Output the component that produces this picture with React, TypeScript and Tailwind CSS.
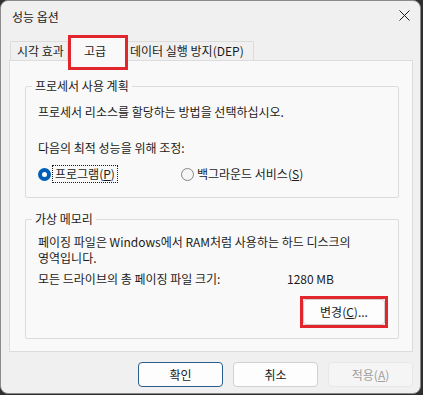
import React from "react";

const font = { fontFamily: '"Noto Sans CJK KR", "Noto Sans", sans-serif' };

function Radio({ checked }: { checked: boolean }) {
  return checked ? (
    <span className="w-[13px] h-[13px] rounded-full bg-[#005fb8] flex items-center justify-center shrink-0">
      <span className="w-[5px] h-[5px] rounded-full bg-white" />
    </span>
  ) : (
    <span className="w-[13px] h-[13px] rounded-full border border-[#858585] bg-[#f6f6f6] shrink-0" />
  );
}

function Group({ title, className, children }: { title: string; className: string; children: React.ReactNode }) {
  return (
    <div className={"relative border border-[#dcdcdc] rounded-[2px] " + className}>
      <span className="absolute left-[6px] top-[-9px] px-[3px] bg-[#f9f9f9] text-[12px] leading-[16px] text-[#1b1b1b]">
        {title}
      </span>
      {children}
    </div>
  );
}

export default function App() {
  return (
    <div className="w-[423px] h-[395px] bg-[#2e2e2e] overflow-hidden" style={font}>
      <div className="w-[421px] h-[394px] bg-[#f0f0f0] rounded-[8px] border border-[#8a8a8a] flex flex-col text-[12px] leading-[16px] text-[#1b1b1b]">
        {/* Title bar */}
        <div className="h-[31px] flex items-center justify-between pl-[11px] pr-[10px]">
          <span className="text-[12px]">성능 옵션</span>
          <svg width="11" height="11" viewBox="0 0 11 11" className="mt-[-2px]">
            <path d="M0.5 0.5 L10.5 10.5 M10.5 0.5 L0.5 10.5" stroke="#1b1b1b" strokeWidth="1" />
          </svg>
        </div>

        {/* Tabs */}
        <div className="h-[28px] ml-[9px] flex items-end relative z-10">
          <div className="w-[58px] h-[19px] border border-b-0 border-[#dcdcdc] bg-[#f0f0f0] pl-[6px] flex items-center">
            시각 효과
          </div>
          <div className="relative w-[58px] h-[24px] mb-[-1px] border border-b-0 border-[#dcdcdc] bg-[#f9f9f9] flex items-start justify-center pt-[5px]">
            <span className="ml-[-4px]">고급</span>
            <span className="absolute left-[-1px] top-[-3px] w-[60px] h-[35px] border-[3px] border-[#e1262d]" />
          </div>
          <div className="w-[128px] h-[19px] border border-b-0 border-l-0 border-[#dcdcdc] bg-[#f0f0f0] pl-[4px] flex items-center">
            데이터 실행 방지(DEP)
          </div>
        </div>

        {/* Panel */}
        <div className="ml-[8px] w-[404px] h-[292px] border border-[#dcdcdc] bg-[#f9f9f9] flex flex-col pl-[15px] pt-[25px]">
          <Group title="프로세서 사용 계획" className="w-[374px] h-[112px]">
            <div className="pl-[12px] pt-[17px] flex flex-col">
              <div>프로세서 리소스를 할당하는 방법을 선택하십시오.</div>
              <div className="mt-[20px]">다음의 최적 성능을 위해 조정:</div>
              <div className="mt-[9px] h-[18px] flex items-center">
                <Radio checked />
                <span className="ml-[1px] h-[18px] px-[2px] border border-dotted border-[#1b1b1b] flex items-center">
                  프로그램(<u>P</u>)
                </span>
                <span className="ml-[63px] flex items-center">
                  <Radio checked={false} />
                  <span className="ml-[3px]">
                    백그라운드 서비스(<u>S</u>)
                  </span>
                </span>
              </div>
            </div>
          </Group>

          <Group title="가상 메모리" className="mt-[21px] w-[374px] h-[120px]">
            <div className="pl-[12px] pr-[10px] pt-[14px] flex flex-col">
              <div>페이징 파일은 Windows에서 RAM처럼 사용하는 하드 디스크의</div>
              <div>영역입니다.</div>
              <div className="mt-[5px] flex">
                <span className="w-[249px]">모든 드라이브의 총 페이징 파일 크기:</span>
                <span>1280 MB</span>
              </div>
              <div className="mt-[9px] flex justify-end">
                <div className="w-[88px] h-[32px] border-[3px] border-[#e1262d]">
                  <div className="w-full h-full border border-[#d0d0d0] bg-[#fdfdfd] rounded-[3px] flex items-center justify-center">
                    변경(<u>C</u>)...
                  </div>
                </div>
              </div>
            </div>
          </Group>
        </div>

        {/* Buttons */}
        <div className="mt-[10px] mr-[7px] flex justify-end gap-[10px]">
          <div className="w-[85px] h-[25px] rounded-[4px] border border-[#2a5d8f] bg-[#fdfdfd] flex items-center justify-center">
            확인
          </div>
          <div className="w-[85px] h-[25px] rounded-[4px] border border-[#d0d0d0] bg-[#fdfdfd] flex items-center justify-center">
            취소
          </div>
          <div className="w-[85px] h-[25px] rounded-[4px] border border-[#e8e8e8] bg-[#f5f5f5] text-[#a0a0a0] flex items-center justify-center">
            적용(<u>A</u>)
          </div>
        </div>
      </div>
    </div>
  );
}
